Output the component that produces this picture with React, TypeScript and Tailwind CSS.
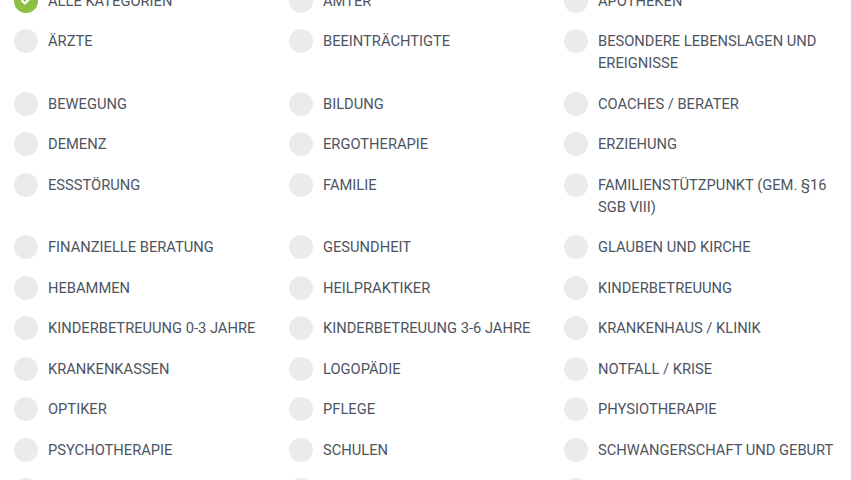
import React from 'react'

const categories = [
  'Alle Kategorien',
  'Ämter',
  'Apotheken',
  'Ärzte',
  'Beeinträchtigte',
  'Besondere Lebenslagen und Ereignisse',
  'Bewegung',
  'Bildung',
  'Coaches / Berater',
  'Demenz',
  'Ergotherapie',
  'Erziehung',
  'Essstörung',
  'Familie',
  'Familienstützpunkt (gem. §16 SGB VIII)',
  'Finanzielle Beratung',
  'Gesundheit',
  'Glauben und Kirche',
  'Hebammen',
  'Heilpraktiker',
  'Kinderbetreuung',
  'Kinderbetreuung 0-3 Jahre',
  'Kinderbetreuung 3-6 Jahre',
  'Krankenhaus / Klinik',
  'Krankenkassen',
  'Logopädie',
  'Notfall / Krise',
  'Optiker',
  'Pflege',
  'Physiotherapie',
  'Psychotherapie',
  'Schulen',
  'Schwangerschaft und Geburt',
  'Selbsthilfe',
  'Senioren',
  'Sport',
]

function Check({ checked }: { checked: boolean }) {
  if (!checked) {
    return <span className="-my-px h-6 w-6 shrink-0 rounded-full bg-[#ebebeb]" />
  }
  return (
    <span className="-my-px flex h-6 w-6 shrink-0 items-center justify-center rounded-full bg-[#8cc043]">
      <svg width="13" height="13" viewBox="0 0 24 24" fill="none">
        <path d="M4 12.5l5 5L20 6.5" stroke="#fff" strokeWidth="4" strokeLinecap="round" strokeLinejoin="round" />
      </svg>
    </span>
  )
}

export default function App() {
  return (
    <div className="h-[480px] w-[851px] overflow-hidden bg-white" style={{ fontFamily: 'Roboto, "Liberation Sans", sans-serif' }}>
      <div className="-mt-[10.5px] grid grid-cols-[275px_275px_275px] gap-y-[18.5px] pl-[14px]">
        {categories.map((c, i) => (
          <label key={c} className="flex cursor-pointer items-start gap-[10px]">
            <Check checked={i === 0} />
            <span className="text-[14.7px] uppercase leading-[22px] text-[#4d5461]">{c}</span>
          </label>
        ))}
      </div>
    </div>
  )
}
